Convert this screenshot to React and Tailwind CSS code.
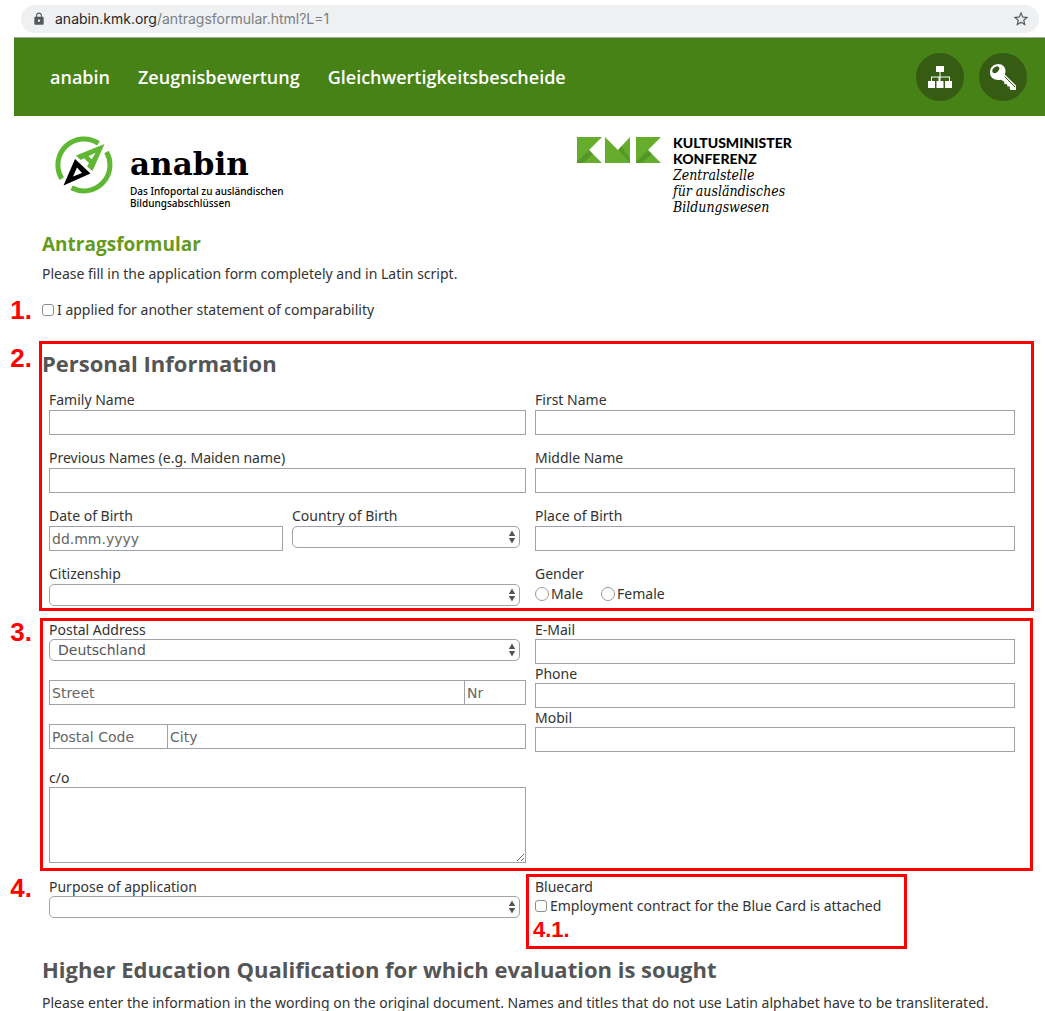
import { useState } from "react";
import { MdLock, MdStarBorder } from "react-icons/md";

const textInput =
  "block h-[25px] w-full min-w-0 border border-[#a0a1a9] bg-white px-0.5 font-['DejaVu_Sans',sans-serif] text-sm text-[#555] outline-none placeholder:text-[#666] focus:border-[#468216]";

const checkbox =
  "size-3 shrink-0 appearance-none rounded-[3px] border border-[#8e8e8e] bg-white checked:bg-[#468216]";

function Field({ id, label, tall, children }) {
  return (
    <div className="min-w-0">
      <label
        htmlFor={id}
        className={tall ? "block h-5 leading-5" : "block h-[18px] leading-[18px]"}
      >
        {label}
      </label>
      {children}
    </div>
  );
}

function SelectBox({ id, options = [""] }) {
  return (
    <div className="relative">
      <select
        id={id}
        className="block h-[22px] w-full appearance-none rounded-[5px] border border-[#a0a1a9] bg-white pr-5 pl-2 font-['DejaVu_Sans',sans-serif] text-sm leading-5 text-[#555] outline-none"
      >
        {options.map((option) => (
          <option key={option}>{option}</option>
        ))}
      </select>
      <svg
        viewBox="0 0 8 14"
        className="pointer-events-none absolute top-1 right-1 h-3.5 w-2"
        fill="#555"
      >
        <path d="M4 0.5 7.2 6H.8zM4 13.5 7.2 8H.8z" />
      </svg>
    </div>
  );
}

function Marker({ children }) {
  return (
    <span className="w-[39px] shrink-0 pr-[7px] text-right font-['Liberation_Sans',sans-serif] text-[26px] leading-7 font-bold text-[#f00]">
      {children}
    </span>
  );
}

function KeyIcon() {
  return (
    <svg viewBox="0 0 26 26" className="size-[26px]">
      <path
        fill="#fff"
        d="M0 8.500C0 3.500 3.500 0 8.500 0 12.500 0 15.500 3 15.500 7c0 1.500-.2 2.600-.7 3.600L26 21.500V26h-5.500l-1-2 .7-1.500h-2.700l-.7-2.500-2.300.2-.5-2.700-3-1.800C5 17 0 14 0 8.500z"
      />
      <ellipse cx="5.800" cy="5.800" rx="4" ry="2.600" fill="#365c13" transform="rotate(-42 5.800 5.800)" />
      <path d="M14.500 12.500 25 23" stroke="#365c13" strokeWidth="1" />
    </svg>
  );
}

function AnabinLogo() {
  return (
    <a href="#" className="flex">
      <svg viewBox="0 0 58 58" className="mt-px size-[58px] shrink-0" fill="none">
        <g stroke="#5fb733" strokeWidth="5">
          <path d="M43.500 7.400A26 26 0 0 0 6.800 42.600" />
          <path d="M51.500 16A26 26 0 0 1 16.600 51.800" />
        </g>
        <path
          fill="#5fb733"
          fillRule="evenodd"
          d="M49.500 8 37.500 35 32 30.500 34 27 29 22.300 25.500 24 21 19.500zM40.500 16.800 33.500 20.200 36.800 23.300z"
        />
        <path
          fill="#000"
          fillRule="evenodd"
          d="M20 23 35.500 37.500 8.500 49.500zM22 31.500 18 40.500 27 37z"
        />
      </svg>
      <span className="ml-[17px] flex flex-col pt-2 text-black">
        <span className="font-['DejaVu_Serif',serif] text-[31px] leading-[42px] font-bold">
          anabin
        </span>
        <span className="font-['Noto_Sans',sans-serif] text-[10px] leading-3 font-medium">
          Das Infoportal zu ausländischen
          <br />
          Bildungsabschlüssen
        </span>
      </span>
    </a>
  );
}

function KmkLogo() {
  return (
    <a href="#" className="flex gap-3 text-black">
      <svg viewBox="0 0 84 26" className="mt-0.5 h-[26px] w-[84px] shrink-0">
        <g fill="#66ad2d">
          <path d="M0 0H25L12 13 25 26H0z" />
          <path d="M28 0 41 13 53 0V26H28z" />
          <path d="M59 0H84L71 13 84 26H59z" />
        </g>
        <g fill="#3f8420">
          <path d="M0 25 12 13 16 17 6 26H0z" opacity=".5" />
          <path d="M41 13 44.500 9 53 22V26z" opacity=".45" />
          <path d="M59 25 71 13 75 17 65 26H59z" opacity=".5" />
        </g>
      </svg>
      <span className="flex flex-col text-sm leading-4">
        <span className="font-['Lato',sans-serif] font-black">KULTUSMINISTER</span>
        <span className="font-['Lato',sans-serif] font-black">KONFERENZ</span>
        <span className="font-['DejaVu_Serif_Condensed','DejaVu_Serif',serif] italic">
          Zentralstelle
          <br />
          für ausländisches
          <br />
          Bildungswesen
        </span>
      </span>
    </a>
  );
}

export default function App() {
  const [gender, setGender] = useState("");

  return (
    <div className="bg-white pt-[5px] font-['Noto_Sans',sans-serif] text-sm text-[#333]">
      {/* Address bar */}
      <div className="mr-1.5 ml-[21px] flex h-7 items-center rounded-full bg-[#eff0f2] pr-[9px] pl-[11px] font-['Inter',sans-serif] text-[#7b7f84]">
        <MdLock className="mr-[9px] size-3.5 text-[#55585d]" />
        <span className="flex-1">
          <span className="text-[#26282c]">anabin.kmk.org</span>/antragsformular.html?L=1
        </span>
        <button aria-label="Bookmark">
          <MdStarBorder className="size-[18px] text-[#55585d]" />
        </button>
      </div>

      <header className="mt-1 ml-3.5 flex h-[79px] items-center border-t border-[#a5a8a0] bg-[#468216] pr-[18px] pl-9 text-white">
        <nav className="flex flex-1 gap-7 font-['Open_Sans',sans-serif] text-lg font-semibold">
          <a href="#">anabin</a>
          <a href="#">Zeugnisbewertung</a>
          <a href="#">Gleichwertigkeitsbescheide</a>
        </nav>
        <div className="flex gap-[15px]">
          <button
            aria-label="Sitemap"
            className="flex size-12 items-center justify-center rounded-full bg-[#365c13]"
          >
            <svg viewBox="0 0 24 22" className="h-[22px] w-6" fill="#fff">
              <path d="M8 0h8v6h-3.500v4.500H22V15h2v7h-7v-7h4v-3.500h-8.500V15h3v7h-7v-7h2v-3.500H4V15h3v7H0v-7h3v-4.500h8.500V6H8z" />
            </svg>
          </button>
          <button
            aria-label="Login"
            className="flex size-12 items-center justify-center rounded-full bg-[#365c13]"
          >
            <KeyIcon />
          </button>
        </div>
      </header>

      <div className="grid grid-cols-[522fr_468fr] pt-[19px] pl-[55px]">
        <AnabinLogo />
        <KmkLogo />
      </div>

      <form onSubmit={(e) => e.preventDefault()}>
        <div className="pt-[15px] pl-[42px]">
          <h1 className="font-['Open_Sans',sans-serif] text-[19px] leading-7 font-bold text-[#669a1d]">
            Antragsformular
          </h1>
          <p className="mt-1.5 leading-5">
            Please fill in the application form completely and in Latin script.
          </p>
        </div>
        <div className="mt-3 flex">
          <Marker>1.</Marker>
          <label className="ml-[3px] flex items-center gap-[3px]">
            <input type="checkbox" className={checkbox} />I applied for another statement of
            comparability
          </label>
        </div>

        {/* Personal information */}
        <div className="mt-[17px] mr-[11px] flex">
          <div className="flex pt-[3px]">
            <Marker>2.</Marker>
          </div>
          <section className="flex-1 border-3 border-[#f00] pr-4 pb-0.5">
            <h2 className="font-['Open_Sans',sans-serif] text-[22px] leading-[38px] font-bold text-[#555]">
              Personal Information
            </h2>
            <div className="mt-2 grid grid-cols-[477fr_480fr] gap-x-[9px] gap-y-[13px] pl-[7px]">
              <Field tall id="family" label="Family Name">
                <input id="family" className={textInput} />
              </Field>
              <Field tall id="first" label="First Name">
                <input id="first" className={textInput} />
              </Field>
              <Field tall id="previous" label="Previous Names (e.g. Maiden name)">
                <input id="previous" className={textInput} />
              </Field>
              <Field tall id="middle" label="Middle Name">
                <input id="middle" className={textInput} />
              </Field>
              <div className="grid grid-cols-[234fr_228fr] gap-[9px] pr-1.5">
                <Field tall id="birthdate" label="Date of Birth">
                  <input id="birthdate" placeholder="dd.mm.yyyy" className={textInput} />
                </Field>
                <Field tall id="birthcountry" label="Country of Birth">
                  <SelectBox id="birthcountry" />
                </Field>
              </div>
              <Field tall id="birthplace" label="Place of Birth">
                <input id="birthplace" className={textInput} />
              </Field>
              <div className="pr-1.5">
                <Field tall id="citizenship" label="Citizenship">
                  <SelectBox id="citizenship" />
                </Field>
              </div>
              <fieldset>
                <legend className="h-5 leading-5">Gender</legend>
                <div className="flex gap-[18px]">
                  {["Male", "Female"].map((g) => (
                    <label key={g} className="flex items-center gap-0.5 leading-5">
                      <input
                        type="radio"
                        name="gender"
                        checked={gender === g}
                        onChange={() => setGender(g)}
                        className="size-3.5 appearance-none rounded-full border border-[#9a9a9a] checked:border-4"
                      />
                      {g}
                    </label>
                  ))}
                </div>
              </fieldset>
            </div>
          </section>
        </div>

        {/* Address and contact */}
        <div className="mt-[7px] mr-3 flex">
          <Marker>3.</Marker>
          <section className="ml-px grid flex-1 grid-cols-[477fr_480fr] gap-x-[9px] border-3 border-[#f00] pr-[15px] pb-[5px] pl-1.5">
            <div>
              <div className="pr-1.5">
                <Field id="country" label="Postal Address">
                  <SelectBox id="country" options={["Deutschland"]} />
                </Field>
              </div>
              <div className="mt-[19px] grid grid-cols-[416fr_61fr]">
                <input aria-label="Street" placeholder="Street" className={textInput} />
                <input aria-label="Nr" placeholder="Nr" className={`${textInput} border-l-0`} />
              </div>
              <div className="mt-[19px] grid grid-cols-[119fr_358fr]">
                <input aria-label="Postal Code" placeholder="Postal Code" className={textInput} />
                <input aria-label="City" placeholder="City" className={`${textInput} border-l-0`} />
              </div>
              <div className="mt-5">
                <Field id="co" label="c/o">
                  <textarea
                    id="co"
                    className="block h-[76px] w-full resize border border-[#a0a1a9] px-0.5 outline-none"
                  />
                </Field>
              </div>
            </div>
            <div className="flex flex-col gap-px">
              <Field id="email" label="E-Mail">
                <input id="email" type="email" className={textInput} />
              </Field>
              <Field id="phone" label="Phone">
                <input id="phone" type="tel" className={textInput} />
              </Field>
              <Field id="mobil" label="Mobil">
                <input id="mobil" type="tel" className={textInput} />
              </Field>
            </div>
          </section>
        </div>

        {/* Purpose and Blue Card */}
        <div className="mt-[3px] mr-[30px] flex">
          <Marker>4.</Marker>
          <div className="ml-2.5 grid flex-1 grid-cols-[477fr_489fr]">
            <div className="pt-1 pr-1.5">
              <Field id="purpose" label="Purpose of application">
                <SelectBox id="purpose" />
              </Field>
            </div>
            <fieldset className="h-[75px] w-fit border-3 border-[#f00] pt-px pr-[23px] pl-1">
              <span className="block h-[18px] pl-0.5 leading-[18px]">Bluecard</span>
              <label className="flex items-center gap-[3px] pl-0.5 leading-5">
                <input type="checkbox" className={checkbox} />
                Employment contract for the Blue Card is attached
              </label>
              <span className="block font-['Liberation_Sans',sans-serif] text-[22px] leading-7 font-bold text-[#f00]">
                4.1.
              </span>
            </fieldset>
          </div>
        </div>

        <div className="pl-[42px]">
          <h2 className="mt-1 font-['Open_Sans',sans-serif] text-[22px] leading-8 font-bold text-[#555]">
            Higher Education Qualification for which evaluation is sought
          </h2>
          <p className="mt-2 leading-5">
            Please enter the information in the wording on the original document. Names and titles
            that do not use Latin alphabet have to be transliterated.
          </p>
        </div>
      </form>
    </div>
  );
}
